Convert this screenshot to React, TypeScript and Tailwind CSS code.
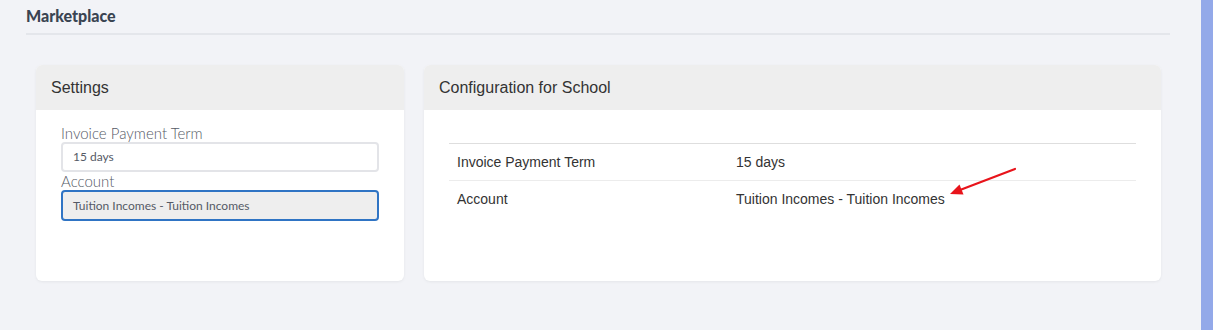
import React from 'react'

const arial = { fontFamily: '"Liberation Sans", Arial, sans-serif' }

function CardHeader({ title }: { title: string }) {
  return (
    <div
      className="h-[45px] flex items-center px-[15px] bg-[#eeeeee] text-[16px] text-[#333333]"
      style={arial}
    >
      {title}
    </div>
  )
}

function Field({
  label,
  value,
  focused,
}: {
  label: string
  value: string
  focused?: boolean
}) {
  return (
    <div>
      <div className="text-[15px] leading-[18px] text-[#555a66] font-light">
        {label}
      </div>
      <div
        className={
          focused
            ? 'h-[31px] flex items-center px-[10px] rounded-[4px] border-2 border-[#2f74c4] bg-[#eeeeee] text-[12px] text-[#555a66]'
            : 'h-[30px] flex items-center px-[10px] rounded-[4px] border-2 border-[#e3e4e8] bg-white text-[12px] text-[#555a66]'
        }
      >
        {value}
      </div>
    </div>
  )
}

export default function App() {
  return (
    <div className="w-[1213px] h-[330px] flex bg-[#f2f3f7] overflow-hidden">
      <div className="flex-1 pl-[26px] pr-[31px]" style={{ fontFamily: 'Lato, "Open Sans", sans-serif' }}>
        {/* Page title */}
        <div className="h-[35px] border-b-2 border-[#e4e6eb] pt-[6px]">
          <h1 className="text-[16px] leading-[20px] font-black text-[#3a4452]">Marketplace</h1>
        </div>

        <div className="flex gap-[20px] mt-[30px] px-[10px] pr-[9px]">
          {/* Settings */}
          <div className="w-[368px] h-[216px] rounded-[6px] bg-white overflow-hidden shadow-[0_1px_3px_rgba(0,0,0,0.06)]">
            <CardHeader title="Settings" />
            <div className="px-[25px] pt-[14px] flex flex-col">
              <Field label="Invoice Payment Term" value="15 days" />
              <Field label="Account" value="Tuition Incomes - Tuition Incomes" focused />
            </div>
          </div>

          {/* Configuration */}
          <div className="relative flex-1 h-[216px] rounded-[6px] bg-white overflow-hidden shadow-[0_1px_3px_rgba(0,0,0,0.06)]">
            <CardHeader title="Configuration for School" />
            <div className="px-[25px] pt-[33px]" style={arial}>
              <table className="w-full text-[14px] text-[#333333]">
                <tbody>
                  <tr className="border-t border-[#dedede]">
                    <td className="h-[37px] pl-[8px] w-[287px]">Invoice Payment Term</td>
                    <td className="h-[37px]">15 days</td>
                  </tr>
                  <tr className="border-t border-[#ececec]">
                    <td className="h-[37px] pl-[8px]">Account</td>
                    <td className="h-[37px]">Tuition Incomes - Tuition Incomes</td>
                  </tr>
                </tbody>
              </table>
            </div>
            {/* annotation arrow */}
            <svg
              className="absolute left-[520px] top-[100px]"
              width="80"
              height="40"
              viewBox="0 0 80 40"
            >
              <line x1="71" y1="4" x2="16" y2="25" stroke="#e8141b" strokeWidth="2.2" strokeLinecap="round" />
              <polygon points="6,29 19.5,29.5 15.5,19.5" fill="#e8141b" />
            </svg>
          </div>
        </div>
      </div>
      <div className="w-[12px] bg-[#93a9e9]" />
    </div>
  )
}
